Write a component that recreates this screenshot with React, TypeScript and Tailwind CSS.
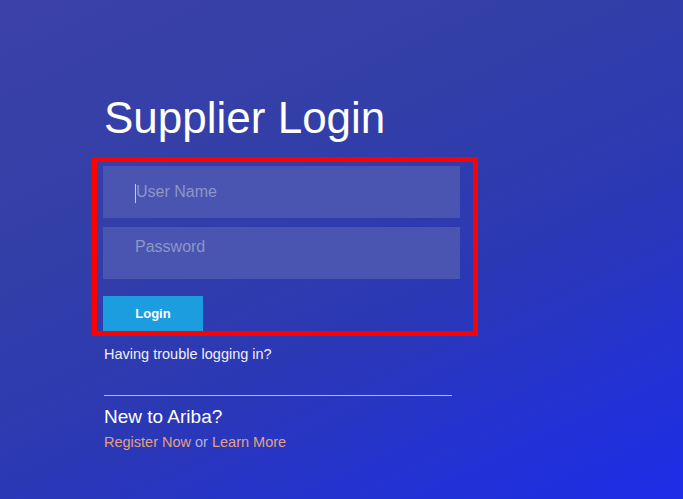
export default function App() {
  return (
    <div
      className="w-[683px] h-[499px] overflow-hidden bg-[linear-gradient(155deg,#3b41a7_0%,#323fa8_35%,#2b38b4_60%,#2433d0_80%,#1d2de8_100%)] font-['Liberation_Sans',Arial,sans-serif] text-white"
    >
      <div className="pl-[92px] pt-[96px]">
        {/* Title */}
        <h1 className="pl-[12px] text-[44px] leading-[44px] font-normal text-white">Supplier Login</h1>

        {/* Login form (highlighted) */}
        <div className="mt-[17px] w-[386px] border-[5px] border-[#ff0000] pt-[4px] pl-[6px] pr-[13px]">
          <div className="flex flex-col gap-[9px]">
            <div className="relative h-[52px] w-[357px] bg-[#4955b0] flex items-center">
              <span className="absolute left-[32px] top-[18px] h-[19px] w-[1px] bg-[#c8cdee]" />
              <input
                className="w-full h-full bg-transparent outline-none pl-[33px] text-[16px] text-white placeholder:text-[#8e96c9]"
                placeholder="User Name"
              />
            </div>
            <div className="h-[52px] w-[357px] bg-[#4955b0]">
              <input
                type="password"
                className="w-full h-[38px] bg-transparent outline-none pl-[32px] pt-[1px] text-[16px] text-white placeholder:text-[#8e96c9]"
                placeholder="Password"
              />
            </div>
          </div>
          <button className="mt-[17px] h-[35px] w-[100px] bg-[#1b9de0] text-[13px] font-bold text-white">
            Login
          </button>
        </div>

        {/* Help */}
        <div className="pl-[12px]">
          <p className="mt-[8px] text-[14.5px] leading-[20px] text-[#eef0fb]">Having trouble logging in?</p>
          <div className="mt-[31px] h-px w-[348px] bg-[#b7bce6]" />
          <h2 className="mt-[9px] text-[19px] leading-[24px] text-white">New to Ariba?</h2>
          <p className="mt-[3px] text-[14.5px] leading-[20px] text-[#aeb3e2]">
            <span className="text-[#e3a07c]">Register Now</span> or{' '}
            <span className="text-[#e3a07c]">Learn More</span>
          </p>
        </div>
      </div>
    </div>
  );
}
